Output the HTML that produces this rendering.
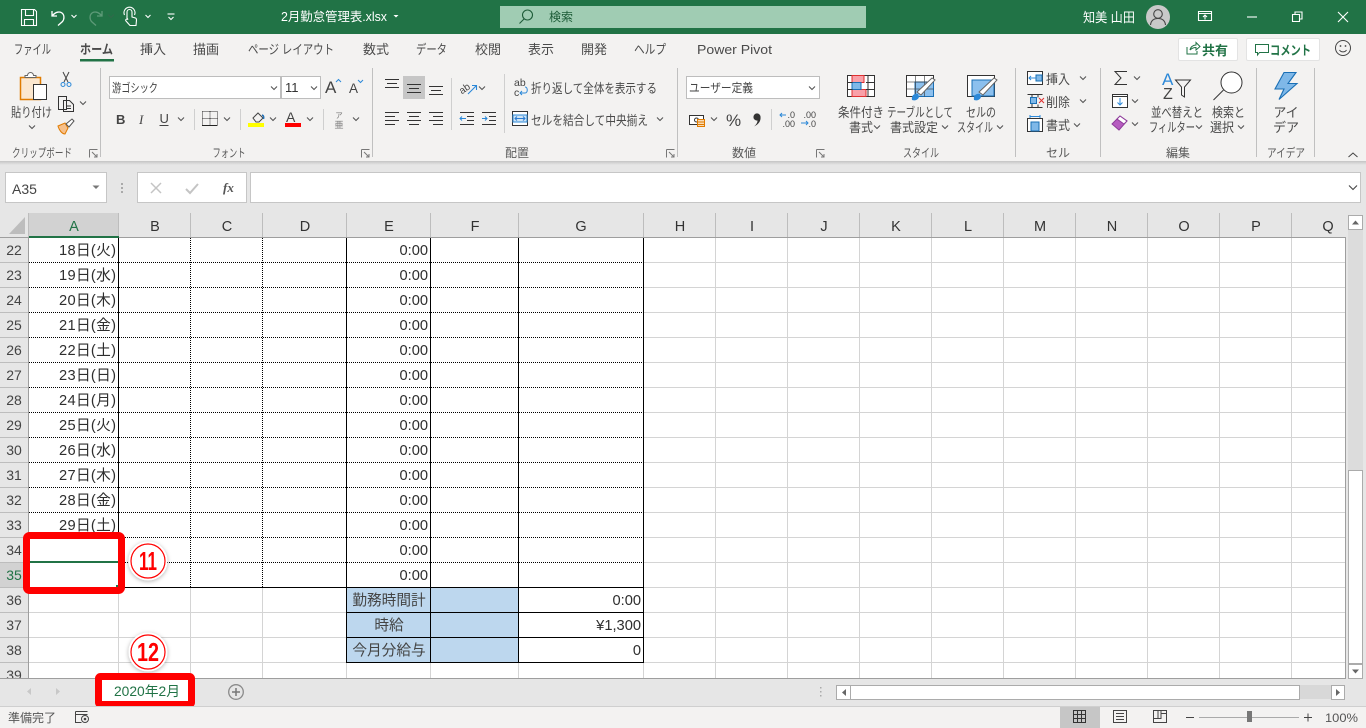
<!DOCTYPE html>
<html lang="ja"><head><meta charset="utf-8"><title>2月勤怠管理表.xlsx - Excel</title>
<style>
html,body{margin:0;padding:0;background:#e6e6e6;width:1366px;height:728px;overflow:hidden}
svg{display:block;font-family:"Liberation Sans","Noto Sans CJK JP",sans-serif}
.t{font-size:13px;fill:#4a4a4a}
.l{font-size:12px;fill:#5a5a5a}
.m{text-anchor:middle}
.h{font-size:14.5px;fill:#333;text-anchor:middle}
.c{font-size:14.67px;fill:#2e2e2e;text-anchor:end}
.j{font-size:14.67px;fill:#444;text-anchor:middle}
.r{font-size:14px;fill:#444;text-anchor:middle}
.k{fill:none;stroke:#333;stroke-width:1}
.g{stroke:#d4d4d4;stroke-width:1}
.n{font-size:26px;font-weight:700;fill:#f00;text-anchor:middle}
</style></head><body>
<svg width="1366" height="728" viewBox="0 0 1366 728" xmlns="http://www.w3.org/2000/svg">
<defs>
<path id="c" d="M-3-1.500 0 1.500 3-1.500" fill="none" stroke="#555" stroke-width="1.100"/>
<path id="w" d="M-2.500-1 0 1.500 2.500-1" fill="none" stroke="#fff" stroke-width="1.100"/>
<linearGradient id="sh" x1="0" y1="0" x2="0" y2="1"><stop offset="0" stop-color="#c4c4c4"/><stop offset="1" stop-color="#e6e6e6"/></linearGradient>
<filter id="b" x="-30%" y="-30%" width="160%" height="160%"><feDropShadow dx="0" dy="1" stdDeviation="2" flood-color="#000" flood-opacity=".3"/></filter>
</defs>
<rect width="1366" height="728" fill="#e6e6e6"/>

<!-- Title bar -->
<rect width="1366" height="34" fill="#217346"/>
<g fill="none" stroke="#fff" stroke-width="1.100">
<path d="M21.500 9.500h13l2 2v14h-15zM25.500 9.500v6h8v-6M24.500 25.500v-6h9v6"/>
<path d="M52 11v5h5M52.500 15.500c3-3.500 7-4.500 9.500-2.500 2.500 2 2.500 6 .5 8.500l-4.500 4" stroke-width="1.300"/>
<path d="M102 11v5h-5M101.500 15.500c-3-3.500-7-4.500-9.500-2.500-2.500 2-2.500 6-.5 8.500l4.500 4" stroke="#5d9a78" stroke-width="1.300"/>
<path d="M127 18v-6a2.500 2.500 0 0 1 5 0v5l3.500 1c1 .3 1 1 1 2l-.5 5.500h-6l-4-4.500c-1-1.200.5-2.500 2-1.500zM124.500 15a5.500 5.500 0 1 1 10 0"/>
<path d="M167.500 14h7"/>
</g>
<use href="#w" x="74" y="16"/><use href="#w" x="148" y="16"/><use href="#w" x="171" y="18"/>
<use href="#c" x="111" y="16" style="opacity:.3"/>
<text x="281" y="21" font-size="12.500" fill="#fff" textLength="106" lengthAdjust="spacingAndGlyphs">2月勤怠管理表.xlsx</text>
<path d="M393.500 15h5l-2.500 2.500z" fill="#fff"/>
<rect x="500" y="6" width="366" height="22" fill="#a0ccb3"/>
<circle cx="527.500" cy="15" r="5" fill="none" stroke="#1e5c38" stroke-width="1.100"/><path d="M524 19l-4.500 4.500" stroke="#1e5c38" stroke-width="1.100"/>
<text x="549" y="21" font-size="12" fill="#1c5b37">検索</text>
<text x="1083" y="22" font-size="13" fill="#fff" textLength="52" lengthAdjust="spacingAndGlyphs">知美 山田</text>
<circle cx="1158" cy="17" r="12" fill="#c9c9c9"/>
<circle cx="1158" cy="14" r="4.300" fill="none" stroke="#444" stroke-width="1.100"/><path d="M1150.500 25c.5-4.500 3.500-6.500 7.500-6.500s7 2 7.500 6.500" fill="none" stroke="#444" stroke-width="1.100"/>
<g fill="none" stroke="#fff" stroke-width="1.100">
<path d="M1198.500 11.500h13v9h-13zM1198.500 13.500h13M1205 19.500v-4M1203 17l2-2 2 2"/>
<path d="M1247 17h10"/>
<path d="M1292.500 14.500h7v7h-7zM1295 14.500v-2.500h7v7h-2.500"/>
<path d="M1338 12l10 10M1348 12l-10 10"/>
</g>

<!-- Ribbon -->
<rect y="34" width="1366" height="127" fill="#f3f2f1"/>
<rect y="161" width="1366" height="4" fill="url(#sh)"/>
<text class="t" x="14" y="54" textLength="37" lengthAdjust="spacingAndGlyphs">ファイル</text>
<text class="t" x="80" y="54" font-weight="700" textLength="33" lengthAdjust="spacingAndGlyphs">ホーム</text>
<rect x="80" y="59" width="34" height="2.500" fill="#217346"/>
<text class="t" x="140" y="54" textLength="26" lengthAdjust="spacingAndGlyphs">挿入</text>
<text class="t" x="193" y="54" textLength="26" lengthAdjust="spacingAndGlyphs">描画</text>
<text class="t" x="248" y="54" textLength="86" lengthAdjust="spacingAndGlyphs">ページ レイアウト</text>
<text class="t" x="363" y="54" textLength="26" lengthAdjust="spacingAndGlyphs">数式</text>
<text class="t" x="416" y="54" textLength="31" lengthAdjust="spacingAndGlyphs">データ</text>
<text class="t" x="475" y="54" textLength="26" lengthAdjust="spacingAndGlyphs">校閲</text>
<text class="t" x="528" y="54" textLength="26" lengthAdjust="spacingAndGlyphs">表示</text>
<text class="t" x="581" y="54" textLength="26" lengthAdjust="spacingAndGlyphs">開発</text>
<text class="t" x="634" y="54" textLength="32" lengthAdjust="spacingAndGlyphs">ヘルプ</text>
<text class="t" x="697" y="54" textLength="75" lengthAdjust="spacingAndGlyphs">Power Pivot</text>

<rect x="1178.500" y="38.500" width="59" height="22" rx="1.500" fill="#fff" stroke="#e3e3e3"/>
<path d="M1187 47v7h10v-3M1190 50c.5-3 3-5 6-5v-2.500l4 4-4 3.500v-2.500c-2.500 0-4.500 1-6 2.500" fill="none" stroke="#217346"/>
<text x="1202" y="55" font-size="13" font-weight="700" fill="#217346" textLength="26" lengthAdjust="spacingAndGlyphs">共有</text>
<rect x="1246.500" y="38.500" width="73" height="22" rx="1.500" fill="#fff" stroke="#e3e3e3"/>
<path d="M1255.500 44.500h13v8h-9l-2 2.500v-2.500h-2z" fill="none" stroke="#217346"/>
<text x="1270" y="55" font-size="13" font-weight="700" fill="#217346" textLength="41" lengthAdjust="spacingAndGlyphs">コメント</text>
<circle cx="1343" cy="48" r="7.500" fill="none" stroke="#444"/>
<circle cx="1340.500" cy="46" r=".9" fill="#444"/><circle cx="1345.500" cy="46" r=".9" fill="#444"/>
<path d="M1339.500 50c1.500 2.500 5.500 2.500 7 0" fill="none" stroke="#444"/>

<g stroke="#c0c0c0"><path d="M100.500 68v89M372.500 68v89M677.500 68v89M1015.500 68v89M1100.500 68v89M1256.500 68v89M1314.500 68v89"/></g>
<g stroke="#cfcfcf"><path d="M194.500 109v21M240.500 109v21M323.500 109v21M451.500 78v52M504.500 74v59M771.500 109v21"/></g>

<!-- Clipboard -->
<path d="M20.500 77.500h20v22h-20z" fill="#fbe7cf" stroke="#e07b00" stroke-width="1.500"/>
<path d="M25 77.500h11v-2h-2.500a3 3 0 0 0-6 0H25z" fill="#fff" stroke="#666"/>
<path d="M33.500 84.500h13v15h-13z" fill="#fff" stroke="#333"/>
<text class="t" x="11" y="117" textLength="41" lengthAdjust="spacingAndGlyphs">貼り付け</text>
<use href="#c" x="32" y="127"/>
<path d="M63 72l5 10M69 72l-5 10" stroke="#444" fill="none"/><circle cx="63" cy="84.500" r="2" fill="none" stroke="#2b88d8"/><circle cx="69" cy="84.500" r="2" fill="none" stroke="#2b88d8"/>
<path d="M58.500 96.500h8v13h-8zM63.500 100.500h6l4 4v7h-10z" fill="#f3f2f1" stroke="#333"/><path d="M66 106h5M66 108.500h5" stroke="#333"/>
<use href="#c" x="83" y="103"/>
<path d="M58 126l7-3 3 5-3 6c-3 0-6-4-7-8z" fill="#f7c08a" stroke="#e07b00"/><path d="M66 124l6-5 2 2-5 6z" fill="#fff" stroke="#555"/>
<text class="l" x="12" y="157" textLength="60" lengthAdjust="spacingAndGlyphs">クリップボード</text>
<path d="M89.500 149.500h8M89.500 149.500v8M92 152l5 5M97 154v3h-3" fill="none" stroke="#777"/>

<!-- Font -->
<rect x="109.500" y="76.500" width="171" height="22" fill="#fff" stroke="#bdbdbd"/>
<rect x="281.500" y="76.500" width="39" height="22" fill="#fff" stroke="#bdbdbd"/>
<text x="112" y="92" font-size="12" fill="#444" textLength="46" lengthAdjust="spacingAndGlyphs">游ゴシック</text>
<text x="285" y="92" font-size="13" fill="#333">11</text>
<use href="#c" x="274" y="88"/><use href="#c" x="314" y="88"/>
<text x="325" y="93" font-size="17" fill="#444">A</text><path d="M336 82l2.500-2.500 2.500 2.500" fill="none" stroke="#2b88d8"/>
<text x="349" y="93" font-size="13.500" fill="#444">A</text><path d="M358 80l2.500 2.500 2.500-2.500" fill="none" stroke="#2b88d8"/>
<text x="116" y="124" font-size="13" font-weight="700" fill="#444">B</text>
<text x="139" y="124" font-size="13" font-style="italic" fill="#444" font-family="Liberation Serif">I</text>
<text x="159.500" y="123" font-size="13" fill="#444">U</text><path d="M159.500 125.500h9" stroke="#444"/>
<use href="#c" x="181" y="119"/>
<path d="M202.500 111.500h15v14M202.500 111.500v14M210 111.500v14M202.500 118.500h15" stroke="#333" stroke-dasharray="1 1" fill="none"/><path d="M202 125.500h15" stroke="#222"/>
<use href="#c" x="227" y="119"/>
<path d="M253 118l5-5 5 5-4 4h-3z" fill="#f3f2f1" stroke="#444"/><path d="M262 115c1.500.5 2 2 1.500 4" fill="none" stroke="#1f6fb5" stroke-width="1.500"/>
<rect x="248" y="123" width="16" height="4" fill="#ff0"/>
<use href="#c" x="273" y="119"/>
<text x="286" y="122" font-size="14" fill="#444">A</text><rect x="285" y="123" width="16" height="4" fill="#f00"/>
<use href="#c" x="310" y="119"/>
<text x="339" y="118" font-size="7.500" fill="#777" class="m">ア</text><text x="339" y="128" font-size="9" fill="#777" class="m">亜</text>
<use href="#c" x="356" y="119"/>
<text class="l m" x="229" y="157" textLength="33" lengthAdjust="spacingAndGlyphs">フォント</text>
<path d="M361.500 149.500h8M361.500 149.500v8M364 152l5 5M369 154v3h-3" fill="none" stroke="#777"/>

<!-- Alignment -->
<rect x="403" y="76" width="22" height="23" fill="#c6c6c6"/>
<g stroke="#333" fill="none">
<path d="M385 79.500h14M387 83.500h10M385 87.500h14M407 84.500h14M409 88.500h10M407 92.500h14M429 86.500h14M431 90.500h10M429 94.500h14"/>
<path d="M385 112.500h14M385 116.500h10M385 120.500h14M385 124.500h10M407 112.500h14M409 116.500h10M407 120.500h14M409 124.500h10M429 112.500h14M433 116.500h10M429 120.500h14M433 124.500h10"/>
<path d="M460 112.500h14M467 116.500h7M467 120.500h7M460 124.500h14M482 112.500h14M482 124.500h14M489 116.500h7M489 120.500h7" stroke="#333"/>
</g>
<path d="M466 118.500h-6M462 116.500l-2 2 2 2M482 118.500h5M485 116.500l2 2-2 2" fill="none" stroke="#2b88d8"/>
<text x="459.500" y="93" font-size="10" fill="#444" transform="rotate(-35 463 90)">ab</text>
<path d="M468 94l8-8M472 85.500h4.500v4.500" fill="none" stroke="#2b88d8" stroke-width="1.100"/>
<use href="#c" x="482" y="88"/>
<text x="514" y="86" font-size="10.500" fill="#444">ab</text><text x="514" y="96" font-size="10.500" fill="#444">c</text>
<path d="M520 93h5c3 0 3-6 0-6" fill="none" stroke="#2b88d8"/><path d="M522 91l-2 2 2 2" fill="none" stroke="#2b88d8"/>
<text class="t" x="531" y="93" textLength="126" lengthAdjust="spacingAndGlyphs">折り返して全体を表示する</text>
<rect x="512.500" y="111.500" width="15" height="14" fill="#fff" stroke="#333"/><rect x="513" y="115" width="14" height="7" fill="#cfe4f5" stroke="#2b88d8"/>
<path d="M515 118.500h10M517 116.500l-2 2 2 2M523 116.500l2 2-2 2" fill="none" stroke="#2b7cd3"/>
<text class="t" x="531" y="125" textLength="117" lengthAdjust="spacingAndGlyphs">セルを結合して中央揃え</text>
<use href="#c" x="660" y="119"/>
<text class="l m" x="517" y="157">配置</text>
<path d="M666.500 149.500h8M666.500 149.500v8M669 152l5 5M674 154v3h-3" fill="none" stroke="#777"/>

<!-- Number -->
<rect x="686.500" y="76.500" width="133" height="22" fill="#fff" stroke="#bdbdbd"/>
<text x="689" y="92" font-size="12" fill="#444" textLength="64" lengthAdjust="spacingAndGlyphs">ユーザー定義</text>
<use href="#c" x="812" y="88"/>
<rect x="689.500" y="115.500" width="14" height="9" fill="#fff" stroke="#333"/><circle cx="696.500" cy="120" r="2" fill="none" stroke="#333"/>
<path d="M697.500 119.500h7v7h-7z" fill="#f9dcb8" stroke="#e07b00"/><path d="M697.500 122h7M697.500 124.500h7" stroke="#e07b00"/>
<use href="#c" x="714" y="119"/>
<text x="726" y="126" font-size="17" fill="#444">%</text>
<circle cx="757" cy="117" r="3.600" fill="#333"/><path d="M760.500 117c.5 4-2 7.500-6.500 9.500 2.500-2 3.500-4 3.500-6z" fill="#333"/>
<text x="795" y="118" font-size="9" fill="#444" text-anchor="end">.0</text><text x="795" y="127" font-size="9" fill="#444" text-anchor="end">.00</text>
<path d="M786 115h-6M782 113l-2 2 2 2" fill="none" stroke="#2b88d8"/>
<text x="816" y="118" font-size="9" fill="#444" text-anchor="end">.00</text><text x="816" y="127" font-size="9" fill="#444" text-anchor="end">.0</text>
<path d="M801 123h7M806 121l2 2-2 2" fill="none" stroke="#2b88d8"/>
<text class="l m" x="744" y="157">数値</text>
<path d="M816.500 149.500h8M816.500 149.500v8M819 152l5 5M824 154v3h-3" fill="none" stroke="#777"/>

<!-- Styles -->
<rect x="847.500" y="75.500" width="27" height="21" fill="#fff" stroke="#333"/>
<rect x="852" y="75.500" width="12" height="7" fill="#f9a0a8" stroke="#e03030"/><rect x="852" y="89.500" width="14" height="7" fill="#f9a0a8" stroke="#e03030"/><rect x="852" y="82.500" width="9" height="7" fill="#7fb8e8" stroke="#1a6fb5"/>
<path d="M847.500 82.500h5M847.500 89.500h5M866 82.500h9M866 89.500h9M868 75.500v21" stroke="#333" fill="none"/>
<text class="t" x="838" y="117" textLength="46" lengthAdjust="spacingAndGlyphs">条件付き</text>
<text class="t" x="849" y="132" textLength="24" lengthAdjust="spacingAndGlyphs">書式</text><use href="#c" x="877" y="127"/>
<rect x="906.500" y="75.500" width="27" height="21" fill="#fff" stroke="#333"/>
<rect x="915" y="82" width="18.500" height="14.500" fill="#8cc0ee" stroke="#1a6fb5"/>
<path d="M906.500 82h27M906.500 89h27M915.500 75.500v21M924.500 75.500v21" stroke="#333" opacity=".6"/>
<path d="M912 100c-1-5 3-7 6-6l1 3c-1 3-4 4-7 3z" fill="#2b88d8"/><path d="M917 92l15-14 3 2-14 15z" fill="#fff" stroke="#666"/>
<text class="t" x="887" y="117" textLength="66" lengthAdjust="spacingAndGlyphs">テーブルとして</text>
<text class="t" x="890" y="132" textLength="48" lengthAdjust="spacingAndGlyphs">書式設定</text><use href="#c" x="945" y="127"/>
<rect x="967.500" y="75.500" width="27" height="21" fill="#fff" stroke="#333"/>
<rect x="972" y="80" width="22" height="16" fill="#8cc0ee" stroke="#1a6fb5"/>
<path d="M974 100c-1-5 3-7 6-6l1 3c-1 3-4 4-7 3z" fill="#2b88d8"/><path d="M979 92l15-14 3 2-14 15z" fill="#fff" stroke="#666"/>
<text class="t" x="966" y="117" textLength="30" lengthAdjust="spacingAndGlyphs">セルの</text>
<text class="t" x="957" y="132" textLength="36" lengthAdjust="spacingAndGlyphs">スタイル</text><use href="#c" x="1000" y="127"/>
<text class="l" x="903" y="157" textLength="36" lengthAdjust="spacingAndGlyphs">スタイル</text>

<!-- Cells -->
<rect x="1027.500" y="71.500" width="15" height="13" fill="#fff" stroke="#333"/><rect x="1036" y="75" width="6" height="6" fill="#7fb8e8" stroke="#1a6fb5"/><path d="M1029 78h7M1031 76l-2 2 2 2" fill="none" stroke="#2b88d8"/>
<text class="t" x="1046" y="84" textLength="24" lengthAdjust="spacingAndGlyphs">挿入</text><use href="#c" x="1083" y="78"/>
<path d="M1027.500 94.500h15M1027.500 107.500h15M1032 94.500v13M1038 94.500v3M1038 104.500v3" stroke="#333" fill="none"/><rect x="1030.500" y="97.500" width="6" height="6" fill="#7fb8e8" stroke="#1a6fb5"/><path d="M1039 98l5 5M1044 98l-5 5" stroke="#e03030"/>
<text class="t" x="1046" y="107" textLength="24" lengthAdjust="spacingAndGlyphs">削除</text><use href="#c" x="1083" y="101"/>
<rect x="1027.500" y="118.500" width="15" height="13" fill="#fff" stroke="#333"/><rect x="1031" y="122" width="8" height="9" fill="#7fb8e8" stroke="#1a6fb5"/><path d="M1030 116.500h10M1030 115v3M1040 115v3" stroke="#2b88d8"/>
<text class="t" x="1046" y="130" textLength="24" lengthAdjust="spacingAndGlyphs">書式</text><use href="#c" x="1077" y="125"/>
<text class="l m" x="1058" y="157">セル</text>

<!-- Editing -->
<path d="M1127 71.500h-12l6 6.500-6 6.500h12" fill="none" stroke="#333"/><use href="#c" x="1137" y="78"/>
<rect x="1112.500" y="94.500" width="15" height="13" fill="#fff" stroke="#333"/><path d="M1112.500 96.500h15" stroke="#333"/><path d="M1120 98v7M1117.500 102.500l2.500 2.500 2.500-2.500" fill="none" stroke="#2b88d8"/><use href="#c" x="1135" y="101"/>
<path d="M1112 124l8-8 7 5-8 9z" fill="#b65cc0" stroke="#8e3b9a"/><path d="M1117 119l3-3 7 5-3 3z" fill="#fff" stroke="#8e3b9a"/><use href="#c" x="1135" y="124"/>
<text x="1162" y="85" font-size="17" fill="#2b88d8">A</text><text x="1163" y="99" font-size="16" fill="#444">Z</text>
<path d="M1175.500 80h15l-6 7v10l-3-2v-8z" fill="#f3f2f1" stroke="#333"/>
<text class="t" x="1151" y="117" textLength="52" lengthAdjust="spacingAndGlyphs">並べ替えと</text>
<text class="t" x="1149" y="132" textLength="46" lengthAdjust="spacingAndGlyphs">フィルター</text><use href="#c" x="1199" y="127"/>
<circle cx="1231.500" cy="82.500" r="10.500" fill="#fff" stroke="#333"/><path d="M1223.500 90l-10 10" stroke="#333"/>
<text class="t" x="1212" y="117" textLength="33" lengthAdjust="spacingAndGlyphs">検索と</text>
<text class="t" x="1210" y="132" textLength="24" lengthAdjust="spacingAndGlyphs">選択</text><use href="#c" x="1241" y="127"/>
<text class="l m" x="1178" y="157">編集</text>

<!-- Ideas -->
<path d="M1284 72.500h12l-8 11h9l-18 16 5-10.500h-9z" fill="#7fb8e8" stroke="#1a6fb5" stroke-width="1.100"/>
<text class="t m" x="1286" y="117">アイ</text>
<text class="t m" x="1286" y="132">デア</text>
<text class="l" x="1267" y="157" textLength="38" lengthAdjust="spacingAndGlyphs">アイデア</text>
<path d="M1348.500 157l4.500-4 4.500 4" fill="none" stroke="#444"/>

<!-- Formula bar -->
<rect x="5.500" y="172.500" width="101" height="30" fill="#fff" stroke="#c6c6c6"/>
<text x="12" y="194" font-size="14" fill="#444">A35</text>
<path d="M92.500 185.500h7l-3.500 3.500z" fill="#777"/>
<g fill="#aaa"><rect x="121" y="183" width="2" height="2"/><rect x="121" y="187" width="2" height="2"/><rect x="121" y="191" width="2" height="2"/></g>
<rect x="137.500" y="172.500" width="109" height="30" fill="#fff" stroke="#c6c6c6"/>
<path d="M151 183l10 10M161 183l-10 10" stroke="#c4c4c4" stroke-width="1.500"/>
<path d="M186 189l4 4 8-9" fill="none" stroke="#c4c4c4" stroke-width="2"/>
<text x="223" y="192" font-size="13" font-style="italic" font-weight="700" fill="#555" font-family="Liberation Serif">fx</text>
<rect x="250.500" y="172.500" width="1110" height="30" fill="#fff" stroke="#c6c6c6"/>
<path d="M1349 185.500l4 4 4-4" fill="none" stroke="#444" stroke-width="1.100"/>

<!-- Grid -->
<rect x="29" y="238" width="1316" height="440" fill="#fff"/>
<path class="g" fill="none" d="M644 262.500h701M644 287.500h701M644 312.500h701M644 337.500h701M644 362.500h701M644 387.500h701M644 412.500h701M644 437.500h701M644 462.500h701M644 487.500h701M644 512.500h701M644 537.500h701M644 562.500h701M644 587.500h701M644 612.500h701M644 637.500h701M29 612.500h317M29 637.500h317M29 662.500h1316M715.500 238v440M787.500 238v440M859.500 238v440M931.500 238v440M1003.500 238v440M1075.500 238v440M1147.500 238v440M1219.500 238v440M1291.500 238v440M118.500 588v90M190.500 588v90M262.500 588v90M346.500 663v15M430.500 663v15M518.500 663v15M643.500 663v15"/>
<rect x="347" y="588" width="171" height="74" fill="#bdd7ee"/>
<path fill="none" stroke="#000" stroke-dasharray="1 1" d="M29 262.500h614M29 287.500h614M29 312.500h614M29 337.500h614M29 362.500h614M29 387.500h614M29 412.500h614M29 437.500h614M29 462.500h614M29 487.500h614M29 512.500h614M29 537.500h614M29 562.500h614M190.500 238v349M262.500 238v349"/>
<path fill="none" stroke="#000" d="M118.500 238v349M346.500 238v424M430.500 238v424M518.500 238v424M643.500 238v424M29 587.500h614M346 612.500h298M346 637.500h298M346 662.500h298"/>

<!-- Column headers -->
<rect x="0" y="213" width="1346" height="24" fill="#e6e6e6"/>
<rect x="29" y="213" width="90" height="24" fill="#d2d2d2"/>
<path d="M25 217v17H9z" fill="#bdbdbd"/>
<path stroke="#bdbdbd" d="M28.500 213v24M118.500 213v24M190.500 213v24M262.500 213v24M346.500 213v24M430.500 213v24M518.500 213v24M643.500 213v24M715.500 213v24M787.500 213v24M859.500 213v24M931.500 213v24M1003.500 213v24M1075.500 213v24M1147.500 213v24M1219.500 213v24M1291.500 213v24"/>
<rect x="0" y="237" width="1346" height="1" fill="#9e9e9e"/>
<rect x="29" y="236" width="90" height="2" fill="#217346"/>
<text class="h" x="74" y="231" style="fill:#217346">A</text><text class="h" x="155" y="231">B</text><text class="h" x="227" y="231">C</text><text class="h" x="305" y="231">D</text><text class="h" x="389" y="231">E</text><text class="h" x="475" y="231">F</text><text class="h" x="581" y="231">G</text><text class="h" x="680" y="231">H</text><text class="h" x="752" y="231">I</text><text class="h" x="824" y="231">J</text><text class="h" x="896" y="231">K</text><text class="h" x="968" y="231">L</text><text class="h" x="1040" y="231">M</text><text class="h" x="1112" y="231">N</text><text class="h" x="1184" y="231">O</text><text class="h" x="1256" y="231">P</text><text class="h" x="1328" y="231">Q</text>

<!-- Row headers -->
<rect x="0" y="238" width="28" height="440" fill="#e6e6e6"/>
<rect x="0" y="563" width="28" height="24" fill="#d2d2d2"/>
<rect x="28" y="237" width="1" height="441" fill="#9e9e9e"/>
<path stroke="#bdbdbd" d="M0 262.500h28M0 287.500h28M0 312.500h28M0 337.500h28M0 362.500h28M0 387.500h28M0 412.500h28M0 437.500h28M0 462.500h28M0 487.500h28M0 512.500h28M0 537.500h28M0 562.500h28M0 587.500h28M0 612.500h28M0 637.500h28M0 662.500h28"/>
<text class="r" x="14" y="255">22</text><text class="r" x="14" y="280">23</text><text class="r" x="14" y="305">24</text><text class="r" x="14" y="330">25</text><text class="r" x="14" y="355">26</text><text class="r" x="14" y="380">27</text><text class="r" x="14" y="405">28</text><text class="r" x="14" y="430">29</text><text class="r" x="14" y="455">30</text><text class="r" x="14" y="480">31</text><text class="r" x="14" y="505">32</text><text class="r" x="14" y="530">33</text><text class="r" x="14" y="555">34</text><text class="r" x="14" y="580" style="fill:#217346">35</text><text class="r" x="14" y="605">36</text><text class="r" x="14" y="630">37</text><text class="r" x="14" y="655">38</text><text class="r" x="14" y="680">39</text>

<!-- Cell text -->
<text class="c" x="116" y="255" textLength="57" lengthAdjust="spacing">18日(火)</text><text class="c" x="116" y="280" textLength="57" lengthAdjust="spacing">19日(水)</text><text class="c" x="116" y="305" textLength="57" lengthAdjust="spacing">20日(木)</text><text class="c" x="116" y="330" textLength="57" lengthAdjust="spacing">21日(金)</text><text class="c" x="116" y="355" textLength="57" lengthAdjust="spacing">22日(土)</text><text class="c" x="116" y="380" textLength="57" lengthAdjust="spacing">23日(日)</text><text class="c" x="116" y="405" textLength="57" lengthAdjust="spacing">24日(月)</text><text class="c" x="116" y="430" textLength="57" lengthAdjust="spacing">25日(火)</text><text class="c" x="116" y="455" textLength="57" lengthAdjust="spacing">26日(水)</text><text class="c" x="116" y="480" textLength="57" lengthAdjust="spacing">27日(木)</text><text class="c" x="116" y="505" textLength="57" lengthAdjust="spacing">28日(金)</text><text class="c" x="116" y="530" textLength="57" lengthAdjust="spacing">29日(土)</text>
<text class="c" x="428" y="255">0:00</text><text class="c" x="428" y="280">0:00</text><text class="c" x="428" y="305">0:00</text><text class="c" x="428" y="330">0:00</text><text class="c" x="428" y="355">0:00</text><text class="c" x="428" y="380">0:00</text><text class="c" x="428" y="405">0:00</text><text class="c" x="428" y="430">0:00</text><text class="c" x="428" y="455">0:00</text><text class="c" x="428" y="480">0:00</text><text class="c" x="428" y="505">0:00</text><text class="c" x="428" y="530">0:00</text><text class="c" x="428" y="555">0:00</text><text class="c" x="428" y="580">0:00</text>
<text class="j" x="389" y="605">勤務時間計</text><text class="j" x="389" y="630">時給</text><text class="j" x="389" y="655">今月分給与</text>
<text class="c" x="641" y="605">0:00</text><text class="c" x="641" y="630">¥1,300</text><text class="c" x="641" y="655">0</text>

<!-- Selection + annotations -->
<rect x="30" y="561" width="88" height="2" fill="#217346"/>
<rect x="116" y="585" width="2" height="2" fill="#217346"/>
<rect x="26.500" y="535.500" width="95" height="55" rx="3" fill="none" stroke="#f00" stroke-width="7"/>
<circle cx="148" cy="561" r="19.500" fill="#fff" filter="url(#b)"/><circle cx="148" cy="561" r="17" fill="none" stroke="#f00" stroke-width="1.200"/>
<text class="n" x="148" y="570" textLength="18" lengthAdjust="spacingAndGlyphs">11</text>
<circle cx="148" cy="652" r="19.500" fill="#fff" filter="url(#b)"/><circle cx="148" cy="652" r="17" fill="none" stroke="#f00" stroke-width="1.200"/>
<text class="n" x="148" y="661" textLength="22" lengthAdjust="spacingAndGlyphs">12</text>

<!-- Sheet tabs -->
<rect x="0" y="679" width="1346" height="28" fill="#e6e6e6"/>
<rect x="0" y="678" width="1346" height="1" fill="#9e9e9e"/>
<path d="M31 688v7l-4-3.500zM56 688v7l4-3.500z" fill="#c8c8c8"/>
<rect x="100" y="677" width="91" height="27" fill="#fff"/>
<text x="114" y="696" font-size="13.500" fill="#217346" textLength="66" lengthAdjust="spacingAndGlyphs">2020年2月</text>
<rect x="98.500" y="676.500" width="93" height="28" rx="2" fill="none" stroke="#f00" stroke-width="7"/>
<circle cx="236" cy="692" r="7.300" fill="none" stroke="#8a8a8a" stroke-width="1.300"/><path d="M232 692h8M236 688v8" stroke="#777" stroke-width="1.500"/>
<g fill="#aaa"><rect x="820" y="687" width="1.500" height="1.500"/><rect x="820" y="691" width="1.500" height="1.500"/><rect x="820" y="695" width="1.500" height="1.500"/></g>
<rect x="836" y="685" width="495" height="14" fill="#d8d8d8"/>
<rect x="836.500" y="685.500" width="14" height="14" fill="#fff" stroke="#ababab"/><path d="M846 689v7l-4-3.500z" fill="#666"/>
<rect x="850.500" y="685.500" width="449" height="14" fill="#fff" stroke="#ababab"/>
<rect x="1331.500" y="685.500" width="13" height="14" fill="#fff" stroke="#ababab"/><path d="M1336 689v7l4-3.500z" fill="#666"/>

<!-- Vertical scrollbar -->
<rect x="1346" y="213" width="20" height="494" fill="#e6e6e6"/>
<rect x="1345" y="237" width="1" height="442" fill="#9e9e9e"/>
<rect x="1348" y="215" width="15" height="463" fill="#dcdcdc"/>
<rect x="1348.500" y="215.500" width="14" height="14" fill="#fff" stroke="#ababab"/><path d="M1352 224.500h7l-3.500-4z" fill="#666"/>
<rect x="1348.500" y="470.500" width="14" height="193" fill="#fff" stroke="#ababab"/>
<rect x="1348.500" y="664.500" width="14" height="14" fill="#fff" stroke="#ababab"/><path d="M1352 669.500h7l-3.500 4z" fill="#666"/>

<!-- Status bar -->
<rect y="707" width="1366" height="21" fill="#f3f2f1"/>
<rect y="706" width="1366" height="1" fill="#cfcfcf"/>
<text x="8" y="722" font-size="12" fill="#555" textLength="48" lengthAdjust="spacingAndGlyphs">準備完了</text>
<path d="M75.500 711.500h12M75.500 714.500h12M75.500 711.500v11h6" fill="none" stroke="#444"/><circle cx="85" cy="719" r="3.500" fill="none" stroke="#444"/><circle cx="85" cy="719" r="1.300" fill="#444"/>
<rect x="1060" y="707" width="40" height="21" fill="#c6c6c6"/>
<path d="M1073.500 710.500h12v12h-12zM1073.500 714.500h12M1073.500 718.500h12M1077.500 710.500v12M1081.500 710.500v12" fill="none" stroke="#333"/>
<path d="M1113.500 710.500h13v12h-13zM1116 713.500h8M1116 716.500h8M1116 719.500h8" fill="none" stroke="#444"/>
<path d="M1153.500 710.500h13v12h-13zM1153.500 718.500h7.500v-8M1161 713.500h5.500M1158 710.500v8" fill="none" stroke="#444"/>
<path d="M1186 717.500h8" stroke="#444"/>
<rect x="1199" y="717" width="100" height="1" fill="#aaa"/>
<rect x="1247" y="711" width="5" height="11" fill="#777"/>
<path d="M1304 717.500h8M1308 713.500v8" stroke="#444"/>
<text x="1325" y="722" font-size="12" fill="#555" textLength="33" lengthAdjust="spacingAndGlyphs">100%</text>
</svg>
</body></html>
